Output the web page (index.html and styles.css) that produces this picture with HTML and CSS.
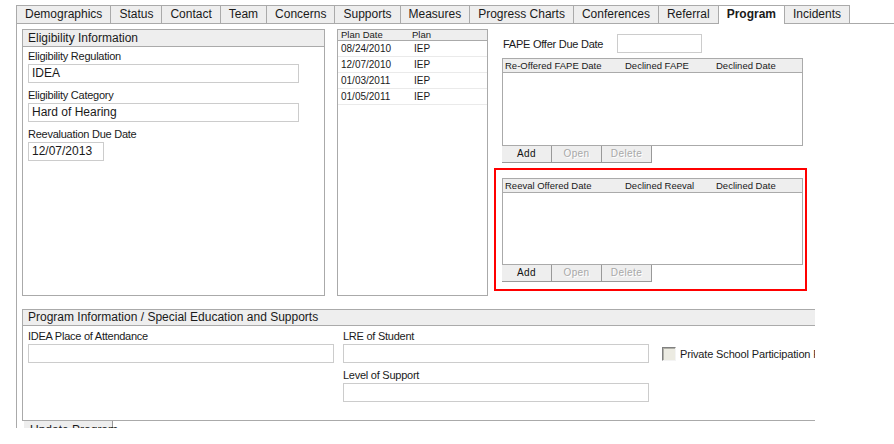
FILE: index.html
```html
<!DOCTYPE html>
<html>
<head>
<meta charset="utf-8">
<link rel="stylesheet" href="styles.css">
</head>
<body>
<div class="app">
  <nav class="tabs">
    <span class="tab">Demographics</span>
    <span class="tab">Status</span>
    <span class="tab">Contact</span>
    <span class="tab">Team</span>
    <span class="tab">Concerns</span>
    <span class="tab">Supports</span>
    <span class="tab">Measures</span>
    <span class="tab">Progress Charts</span>
    <span class="tab">Conferences</span>
    <span class="tab">Referral</span>
    <span class="tab active">Program</span>
    <span class="tab">Incidents</span>
  </nav>
  <div class="content">
    <div class="top-row">
      <section class="panel elig">
        <div class="panel-head">Eligibility Information</div>
        <div class="fields">
          <div class="field">
            <div class="label">Eligibility Regulation</div>
            <div class="input wide">IDEA</div>
          </div>
          <div class="field">
            <div class="label">Eligibility Category</div>
            <div class="input wide">Hard of Hearing</div>
          </div>
          <div class="field">
            <div class="label">Reevaluation Due Date</div>
            <div class="input date">12/07/2013</div>
          </div>
        </div>
      </section>

      <div class="plan-table">
        <div class="plan-head"><span class="c-date">Plan Date</span><span>Plan</span></div>
        <div class="plan-row"><span class="c-date">08/24/2010</span><span>IEP</span></div>
        <div class="plan-row"><span class="c-date">12/07/2010</span><span>IEP</span></div>
        <div class="plan-row"><span class="c-date">01/03/2011</span><span>IEP</span></div>
        <div class="plan-row"><span class="c-date">01/05/2011</span><span>IEP</span></div>
      </div>

      <div class="right-col">
        <div class="fape-row">
          <span class="label fape-label">FAPE Offer Due Date</span>
          <div class="input fape-input"></div>
        </div>
        <div class="grid-block">
          <div class="grid">
            <div class="grid-head"><span class="g1">Re-Offered FAPE Date</span><span class="g2">Declined FAPE</span><span>Declined Date</span></div>
            <div class="grid-body"></div>
          </div>
          <div class="btns">
            <span class="btn">Add</span><span class="btn disabled">Open</span><span class="btn disabled">Delete</span>
          </div>
        </div>
        <div class="highlight">
          <div class="grid">
            <div class="grid-head"><span class="g1">Reeval Offered Date</span><span class="g2">Declined Reeval</span><span>Declined Date</span></div>
            <div class="grid-body"></div>
          </div>
          <div class="btns">
            <span class="btn">Add</span><span class="btn disabled">Open</span><span class="btn disabled">Delete</span>
          </div>
        </div>
      </div>
    </div>

    <section class="panel program">
      <div class="panel-head">Program Information / Special Education and Supports</div>
      <div class="program-body">
        <div class="col col1">
          <div class="label">IDEA Place of Attendance</div>
          <div class="input"></div>
        </div>
        <div class="col col2">
          <div class="label">LRE of Student</div>
          <div class="input"></div>
          <div class="label second">Level of Support</div>
          <div class="input"></div>
        </div>
        <div class="col col3">
          <span class="checkbox"></span>
          <span class="check-label">Private School Participation Flag</span>
        </div>
      </div>
    </section>
    <div class="update">Update Program</div>
  </div>
</div>
</body>
</html>
```

FILE: styles.css
```css
* { box-sizing: border-box; }
html, body { margin: 0; padding: 0; background: #fff; }
body {
  font-family: "Liberation Sans", Arial, sans-serif;
  font-size: 12px;
  color: #1a1a1a;
}
.app {
  height: 428px;
  overflow: hidden;
}
.tabs {
  display: flex;
  margin-left: 16px;
  padding-top: 5px;
  position: relative;
  z-index: 1;
}
.tab {
  height: 18px;
  line-height: 17px;
  padding: 0 8px;
  background: #eeeeee;
  border: 1px solid #aaaaaa;
  border-left: 0;
  border-bottom: 0;
  white-space: nowrap;
}
.tab:first-child { border-left: 1px solid #aaaaaa; }
.tab.active {
  background: #fff;
  font-weight: bold;
  height: 19px;
  margin-bottom: -1px;
}
.content {
  margin-left: 16px;
  border-top: 1px solid #aaaaaa;
  border-left: 1px solid #aaaaaa;
  padding: 5px 0 0 5px;
  height: 405px;
}
.top-row {
  display: flex;
  align-items: flex-start;
}
.panel {
  border: 1px solid #aaaaaa;
  background: #fff;
}
.panel-head {
  background: #eeeeee;
  border-bottom: 1px solid #aaaaaa;
  line-height: 16px;
  padding-left: 5px;
  white-space: nowrap;
}
.elig {
  width: 303px;
  height: 267px;
  margin-right: 12px;
}
.fields { padding: 2px 0 0 5px; }
.field + .field { margin-top: 5px; }
.label {
  font-size: 11px;
  letter-spacing: -0.25px;
  line-height: 14px;
  margin-bottom: 1px;
  white-space: nowrap;
}
.input {
  height: 19px;
  border: 1px solid #cccccc;
  line-height: 17px;
  padding-left: 3px;
  font-size: 12px;
  background: #fff;
}
.input.wide { width: 271px; }
.input.date { width: 76px; }

.plan-table {
  width: 151px;
  height: 267px;
  border: 1px solid #aaaaaa;
  margin-right: 6px;
  font-size: 10px;
}
.plan-head {
  background: #eeeeee;
  border-bottom: 1px solid #aaaaaa;
  line-height: 10px;
  height: 11px;
  font-size: 9.5px;
  display: flex;
  padding-left: 3px;
}
.plan-row {
  display: flex;
  height: 16px;
  line-height: 15px;
  border-bottom: 1px solid #eaeaea;
  padding-left: 3px;
}
.c-date { width: 71px; }
.plan-row .c-date + span { padding-left: 2px; }

.right-col { width: 313px; }
.fape-row {
  display: flex;
  align-items: center;
  margin-top: 5px;
  padding-left: 9px;
  height: 19px;
}
.fape-label { width: 114px; margin-bottom: 0; }
.fape-input { width: 85px; }
.grid-block {
  margin: 5px 0 0 8px;
  width: 301px;
}
.grid {
  width: 301px;
  border: 1px solid #aaaaaa;
}
.grid-head {
  display: flex;
  background: #eeeeee;
  border-bottom: 1px solid #aaaaaa;
  height: 14px;
  line-height: 13px;
  font-size: 9.5px;
  padding-left: 2px;
  white-space: nowrap;
}
.g1 { width: 120px; }
.g2 { width: 91px; }
.grid-body { height: 72px; }
.highlight .grid-body { height: 71px; }
.btns { display: flex; }
.btn {
  width: 50px;
  height: 17px;
  line-height: 16px;
  text-align: center;
  background: #eeeeee;
  border-right: 1px solid #999999;
  border-bottom: 1px solid #999999;
  font-size: 10px;
  letter-spacing: 0.4px;
  color: #111;
}
.btn.disabled {
  color: #a8a8a8;
  text-shadow: 1px 1px 0 #ffffff;
}
.highlight {
  margin-top: 5px;
  width: 313px;
  border: 2px solid #ff0000;
  padding: 8px 2px 7px 6px;
}

.program {
  margin-top: 13px;
  width: 793px;
  border-right: 0;
  overflow: hidden;
}
.program .panel-head { line-height: 15px; }
.program-body {
  display: flex;
  height: 94px;
  padding: 3px 0 0 5px;
}
.col1 { width: 306px; margin-right: 9px; flex: none; }
.col2 { width: 306px; margin-right: 13px; flex: none; }
.label.second { margin-top: 5px; }
.col3 {
  display: flex;
  align-items: center;
  height: 14px;
  margin-top: 18px;
  white-space: nowrap;
}
.checkbox {
  width: 14px;
  height: 14px;
  flex: none;
  background: #ecebe2;
  border-top: 1px solid #808080;
  border-left: 1px solid #808080;
  border-right: 1px solid #f4f4f4;
  border-bottom: 1px solid #f4f4f4;
  box-shadow: inset 1px 1px 0 #b0b0a8;
  margin-right: 4px;
}
.check-label {
  font-size: 11px;
  letter-spacing: -0.15px;
}
.update {
  margin-left: 2px;
  width: 89px;
  height: 18px;
  line-height: 18px;
  background: #eeeeee;
  border-right: 1px solid #999999;
  padding-left: 6px;
  white-space: nowrap;
}
```
